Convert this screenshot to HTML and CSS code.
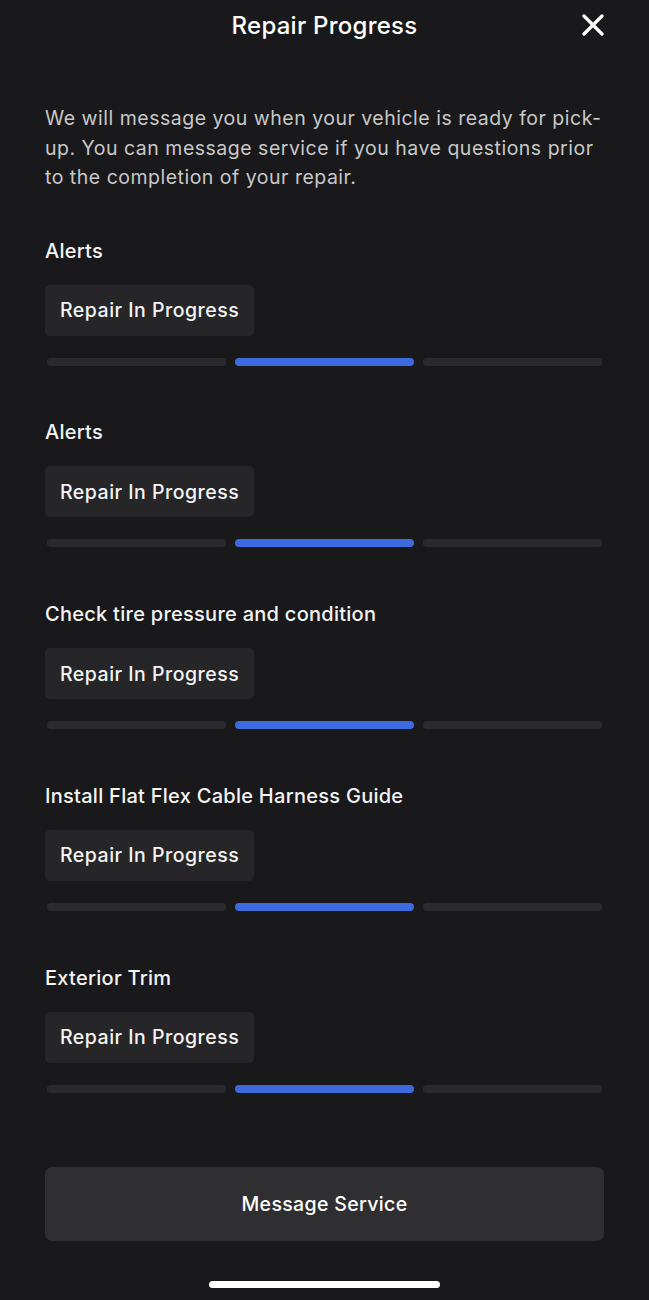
FILE: index.html
```html
<!DOCTYPE html>
<html lang="en">
<head>
    <meta charset="UTF-8">
    <meta name="viewport" content="width=device-width, initial-scale=1.0">
    <title>Repair Progress</title>
    <link rel="stylesheet" href="styles.css">
</head>
<body>
    <header class="top-bar">
        <span></span>
        <h1 class="title">Repair Progress</h1>
        <button class="close-btn" aria-label="Close">
            <svg width="22" height="22" viewBox="0 0 22 22">
                <path d="M2 2 L20 20 M20 2 L2 20" stroke="#fff" stroke-width="3.2" stroke-linecap="round"/>
            </svg>
        </button>
    </header>

    <main class="content">
        <p class="intro">We will message you when your vehicle is ready for pick-up. You can message service if you have questions prior to the completion of your repair.</p>

        <div class="steps">
            <section class="step">
                <h2>Alerts</h2>
                <div class="status">Repair In Progress</div>
                <div class="progress"><span></span><span class="active"></span><span></span></div>
            </section>
            <section class="step">
                <h2>Alerts</h2>
                <div class="status">Repair In Progress</div>
                <div class="progress"><span></span><span class="active"></span><span></span></div>
            </section>
            <section class="step">
                <h2>Check tire pressure and condition</h2>
                <div class="status">Repair In Progress</div>
                <div class="progress"><span></span><span class="active"></span><span></span></div>
            </section>
            <section class="step">
                <h2>Install Flat Flex Cable Harness Guide</h2>
                <div class="status">Repair In Progress</div>
                <div class="progress"><span></span><span class="active"></span><span></span></div>
            </section>
            <section class="step">
                <h2>Exterior Trim</h2>
                <div class="status">Repair In Progress</div>
                <div class="progress"><span></span><span class="active"></span><span></span></div>
            </section>
        </div>

        <button class="message-btn">Message Service</button>
    </main>

    <div class="home-bar"></div>
</body>
</html>
```

FILE: styles.css
```css
body {
    margin: 0;
    background-color: #19191b;
    color: #f2f2f2;
    font-family: Inter, "Noto Sans", sans-serif;
    width: 649px;
    height: 1300px;
    overflow: hidden;
}

.top-bar {
    display: grid;
    grid-template-columns: 1fr auto 1fr;
    align-items: center;
    height: 50px;
}
.title {
    margin: 0;
    font-size: 24px;
    font-weight: 500;
    color: #fff;
    letter-spacing: 0.25px;
}
.close-btn {
    justify-self: end;
    margin-right: 45px;
    padding: 0;
    background: none;
    border: none;
    display: flex;
    cursor: pointer;
}

.content {
    padding: 0 45px;
}
.intro {
    margin: 54px 0 46px;
    font-size: 19.5px;
    line-height: 29.5px;
    color: #c8c8c8;
    letter-spacing: 0.5px;
}

.steps {
    display: flex;
    flex-direction: column;
    gap: 54.75px;
}
.step h2 {
    margin: 0 0 22px;
    font-size: 20px;
    line-height: 24px;
    font-weight: 500;
    color: #f4f4f4;
    letter-spacing: 0.27px;
}
.status {
    display: inline-flex;
    align-items: center;
    height: 51px;
    padding: 0 15px;
    background-color: #262628;
    border-radius: 5px;
    font-size: 19.5px;
    font-weight: 500;
    color: #f4f4f4;
    letter-spacing: 0.5px;
}
.progress {
    display: flex;
    gap: 9px;
    margin: 22px 2px 0;
}
.progress span {
    flex: 1;
    height: 8px;
    border-radius: 4px;
    background-color: #2b2b2d;
}
.progress .active {
    background-color: #3e6ae0;
}

.message-btn {
    display: block;
    width: 100%;
    height: 74px;
    margin-top: 74px;
    background-color: #2f2f31;
    border: none;
    border-radius: 7px;
    color: #fff;
    font-family: inherit;
    font-size: 19.5px;
    font-weight: 500;
    letter-spacing: 0.35px;
    cursor: pointer;
}

.home-bar {
    width: 231px;
    height: 7px;
    margin: 40px auto 0;
    background-color: #fff;
    border-radius: 4px;
}
```
